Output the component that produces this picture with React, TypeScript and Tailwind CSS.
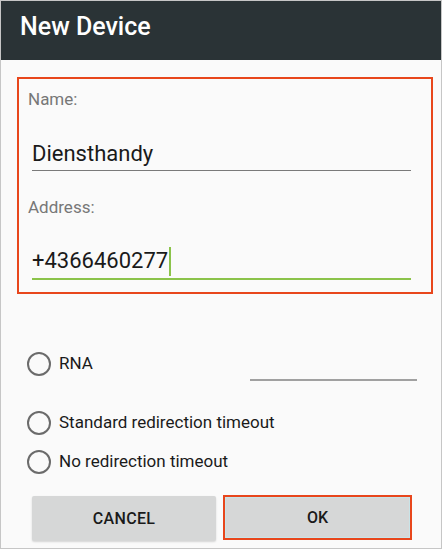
import React from 'react';

const font = { fontFamily: 'Roboto, "Noto Sans", Arial, sans-serif' };

const Radio = () => (
  <span className="block w-[24px] h-[24px] rounded-full border-2 border-[#6b6b6b] shrink-0" />
);

export default function App() {
  return (
    <div className="w-[442px] h-[549px] border border-[#c6c6c6] bg-[#fafafa] overflow-hidden" style={font}>
      {/* Title bar */}
      <div className="h-[59px] bg-[#2a3336] pl-[19px] pt-[13px]">
        <h1 className="text-[25px] leading-none font-medium text-white">New Device</h1>
      </div>

      {/* Highlighted fields */}
      <div className="ml-[16px] mt-[17px] w-[416px] h-[217px] border-2 border-[#e8461c] pt-[12px]">
        <div className="pl-[9px] text-[17px] leading-none text-[#777]">Name:</div>
        <div className="ml-[13px] mr-[20px] mt-[35px] border-b border-[#7a7a7a] pb-[5px]">
          <span className="block text-[22px] leading-none text-[#1a1a1a]">Diensthandy</span>
        </div>

        <div className="pl-[9px] mt-[28px] text-[17px] leading-none text-[#777]">Address:</div>
        <div className="ml-[13px] mr-[20px] mt-[34px] border-b-2 border-[#8bc34a] pb-[6px]">
          <div className="flex items-center h-[22px]">
            <span className="text-[22px] leading-none text-[#1a1a1a]">+4366460277</span>
            <span className="w-[2px] h-[29px] bg-[#8bc34a] ml-[1px] shrink-0" />
          </div>
        </div>
      </div>

      {/* Options */}
      <div className="mt-[58px] pl-[26px]">
        <div className="flex items-start">
          <div className="flex items-center gap-[8px] h-[24px]">
            <Radio />
            <span className="text-[17px] text-[#1a1a1a]">RNA</span>
          </div>
          <div className="ml-auto mr-[24px] mt-[27px] w-[167px] h-[2px] bg-[#a0a0a0]" />
        </div>

        <div className="flex items-center gap-[8px] h-[24px] mt-[30px]">
          <Radio />
          <span className="text-[17px] text-[#1a1a1a]">Standard redirection timeout</span>
        </div>

        <div className="flex items-center gap-[8px] h-[24px] mt-[15px]">
          <Radio />
          <span className="text-[17px] text-[#1a1a1a]">No redirection timeout</span>
        </div>
      </div>

      {/* Buttons */}
      <div className="flex items-start gap-[7px] ml-[31px] mt-[22px]">
        <button className="w-[184px] h-[45px] rounded-[2px] bg-[#d6d7d7] shadow-[0_1px_2px_rgba(0,0,0,0.15)] text-[16px] font-medium text-[#1a1a1a] tracking-[0.3px]">
          CANCEL
        </button>
        <button className="w-[189px] h-[45px] border-2 border-[#e8461c] bg-[#d6d7d7] shadow-[inset_0_0_0_1px_#c9e4e8] text-[16px] font-medium text-[#1a1a1a] -mt-[1px]">
          OK
        </button>
      </div>
    </div>
  );
}
